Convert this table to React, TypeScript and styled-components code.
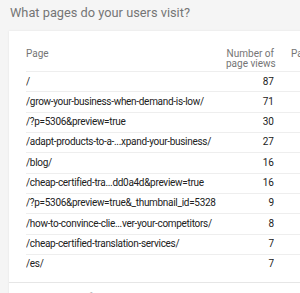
import React from 'react';
import styled, { createGlobalStyle } from 'styled-components';

const GlobalStyle = createGlobalStyle`
  html, body {
    margin: 0;
    padding: 0;
    background: #f5f5f5;
    overflow: hidden;
  }
  body {
    font-family: Roboto, "Liberation Sans", Arial, sans-serif;
  }
`;

const Page = styled.div`
  width: 300px;
  height: 293px;
  overflow: hidden;
  padding: 4px 0 0 9px;
  box-sizing: border-box;
`;

const Title = styled.h2`
  margin: 0 0 9px 1px;
  font-size: 12.8px;
  font-weight: 400;
  line-height: 18px;
  color: #757575;
  white-space: nowrap;
`;

const Card = styled.div`
  width: 340px;
  background: #fff;
  box-shadow: 0 0 2px rgba(0, 0, 0, 0.08);
  padding: 18px 0 0 17px;
`;

const Table = styled.table`
  border-collapse: collapse;
  table-layout: fixed;
  width: 320px;
  font-size: 10px;
  color: #212121;
`;

const HeadCell = styled.th<{ numeric?: boolean; w: number }>`
  width: ${p => p.w}px;
  font-weight: 400;
  color: #757575;
  text-align: ${p => (p.numeric ? 'right' : 'left')};
  vertical-align: top;
  line-height: 10px;
  padding: 0 0 2px 0;
  border-bottom: 1px solid #eeeeee;
  white-space: nowrap;
`;

const Gap = styled.th`
  width: 15px;
  border-bottom: 1px solid #eeeeee;
`;

const Cell = styled.td<{ numeric?: boolean }>`
  text-align: ${p => (p.numeric ? 'right' : 'left')};
  padding: 2.5px 0;
  line-height: 14.33px;
  letter-spacing: ${p => (p.numeric ? '0' : '-0.3px')};
  border-bottom: 1px solid #eeeeee;
  white-space: nowrap;
  overflow: hidden;
`;

const Row = styled.tr<{ last?: boolean }>`
  ${p => (p.last ? 'td { border-bottom: none; }' : '')}
`;

const Footer = styled.div`
  margin: 8px 0 0 -17px;
  border-top: 1px solid #e6e6e6;
  padding: 8.5px 0 0 20px;
  font-size: 10px;
  line-height: 12px;
  color: #bdbdbd;
`;

const rows: [string, number][] = [
  ['/', 87],
  ['/grow-your-business-when-demand-is-low/', 71],
  ['/?p=5306&preview=true', 30],
  ['/adapt-products-to-a-...xpand-your-business/', 27],
  ['/blog/', 16],
  ['/cheap-certified-tra...dd0a4d&preview=true', 16],
  ['/?p=5306&preview=true&_thumbnail_id=5328', 9],
  ['/how-to-convince-clie...ver-your-competitors/', 8],
  ['/cheap-certified-translation-services/', 7],
  ['/es/', 7],
];

export default function App() {
  return (
    <Page>
      <GlobalStyle />
      <Title>What pages do your users visit?</Title>
      <Card>
        <Table>
          <thead>
            <tr>
              <HeadCell w={200}>Page</HeadCell>
              <HeadCell numeric w={48}>
                Number of
                <br />
                page views
              </HeadCell>
              <Gap />
              <HeadCell w={57}>Page views %</HeadCell>
            </tr>
          </thead>
          <tbody>
            {rows.map(([path, views], i) => (
              <Row key={i} last={i === rows.length - 1}>
                <Cell>{path}</Cell>
                <Cell numeric>{views}</Cell>
                <Cell />
                <Cell />
              </Row>
            ))}
          </tbody>
        </Table>
        <Footer>Rows 1 - 10 of 61</Footer>
      </Card>
    </Page>
  );
}
